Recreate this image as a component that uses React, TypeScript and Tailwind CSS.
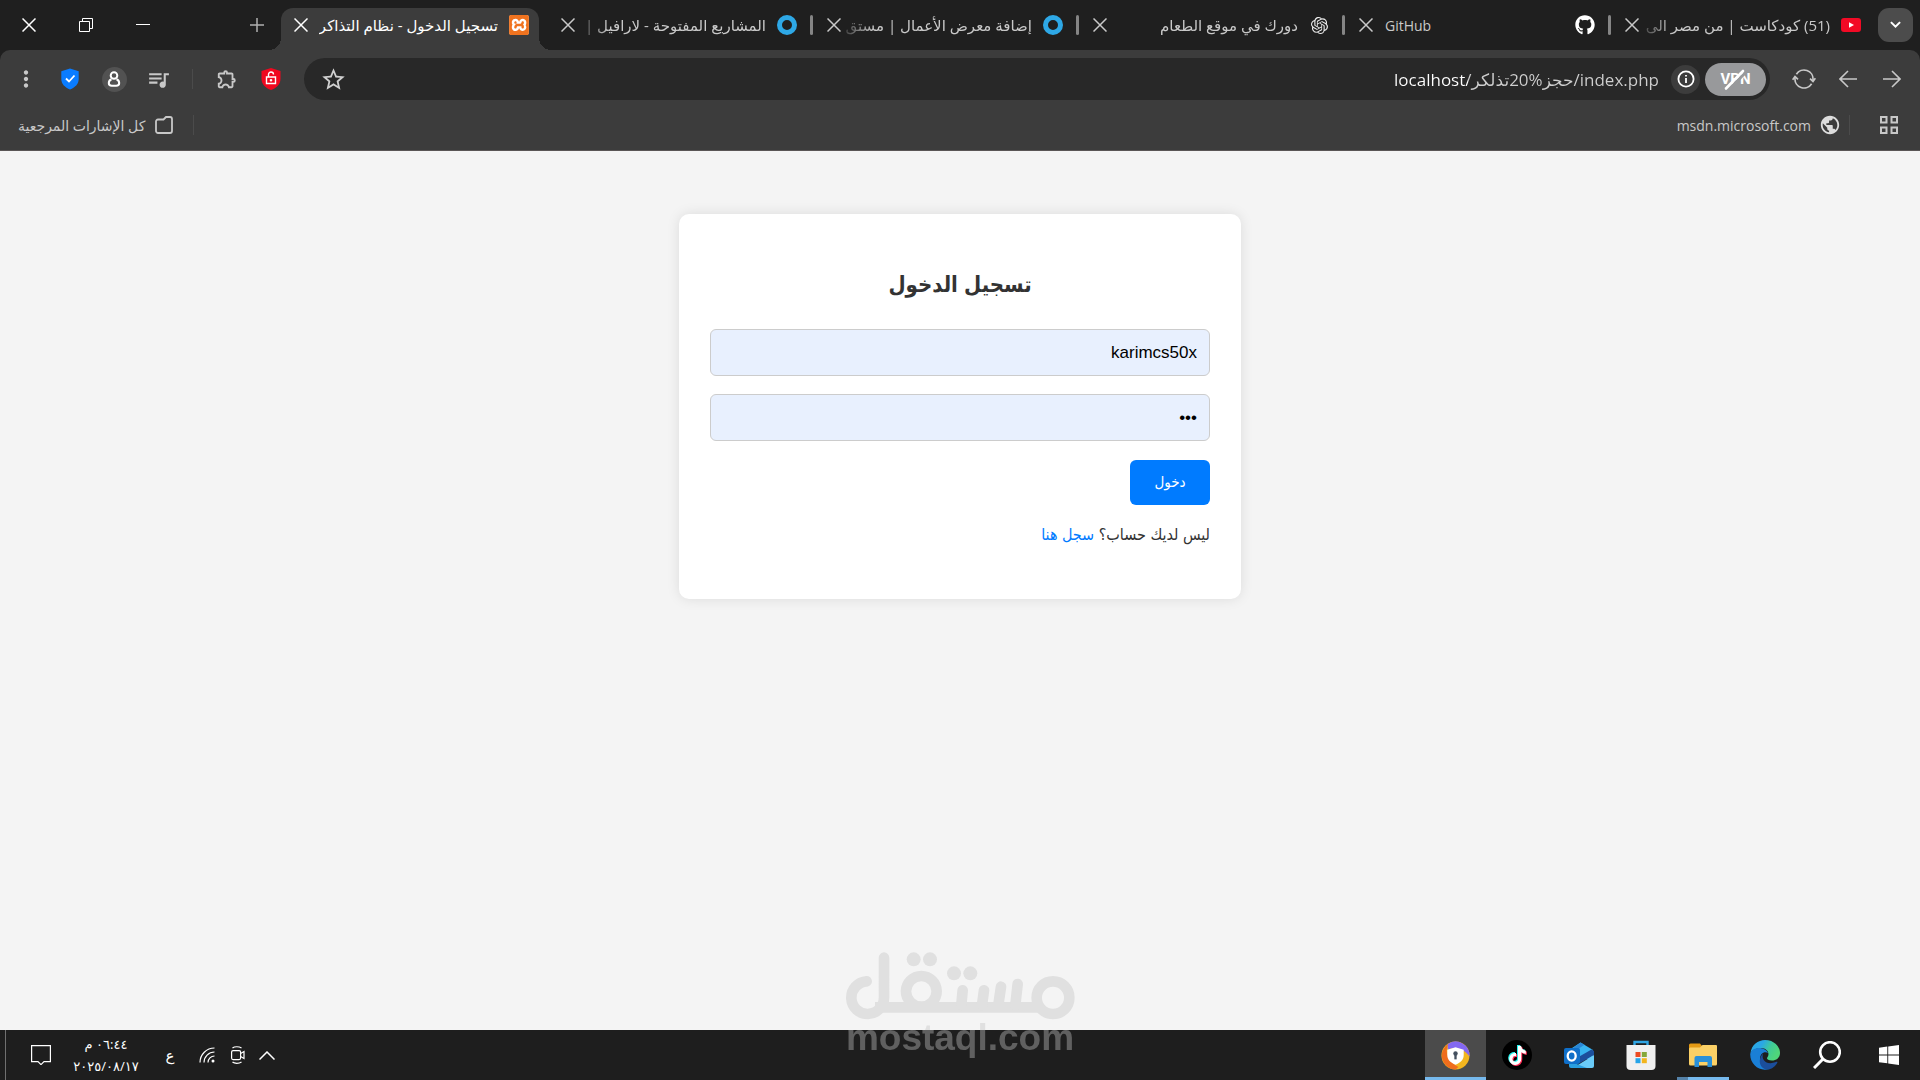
import React from "react";
import { FaGithub, FaTiktok } from "react-icons/fa";
import { SiOpenai, SiXampp } from "react-icons/si";
import {
  MdMoreVert,
  MdOutlineExtension,
  MdPublic,
  MdQueueMusic,
  MdStarBorder,
} from "react-icons/md";
import { clsx } from "clsx";

interface TabProps {
  title: string;
  icon: React.ReactNode;
  ltr?: boolean;
}

const CloseIcon = () => (
  <svg viewBox="0 0 14 14" className="size-[14px]" fill="none" stroke="currentColor" strokeWidth="1.5">
    <path d="M0.5 0.5l13 13M13.5 0.5l-13 13" />
  </svg>
);

const YoutubeIcon = () => (
  <svg viewBox="0 0 20 14" className="w-5 shrink-0">
    <rect width="20" height="14" rx="3" fill="#f20a25" />
    <path d="M8 4.2v5.6L13 7z" fill="#fff" />
  </svg>
);

const RingIcon = () => (
  <svg viewBox="0 0 20 20" className="size-5 shrink-0" fill="none">
    <circle cx="10" cy="10" r="7.5" stroke="#2ea8e6" strokeWidth="5" />
  </svg>
);

const XamppIcon = () => (
  <span className="flex size-5 shrink-0 items-center justify-center rounded-[3px] bg-white">
    <SiXampp className="size-5 text-[#f0731f]" />
  </span>
);

const tabs: TabProps[] = [
  { title: "(51) كودكاست | من مصر الى", icon: <YoutubeIcon /> },
  { title: "GitHub", icon: <FaGithub className="size-5 shrink-0 text-white" />, ltr: true },
  { title: "دورك في موقع الطعام", icon: <SiOpenai className="size-[17px] text-[#eeeeee]" /> },
  { title: "إضافة معرض الأعمال | مستق", icon: <RingIcon /> },
  { title: "المشاريع المفتوحة - لارافيل |", icon: <RingIcon /> },
];

const Tab: React.FC<TabProps> = ({ title, icon, ltr }) => (
  <div className="flex h-full min-w-0 basis-[263px] items-center gap-1 pr-[14px] pl-[14px] text-[#c9c9c9]">
    <span className="ml-2 flex w-[18px] shrink-0 items-center justify-center">{icon}</span>
    <span
      dir={ltr ? "ltr" : "rtl"}
      className={clsx(
        "min-w-0 flex-1 overflow-hidden whitespace-nowrap",
        ltr ? "pl-2 text-[14px]" : "text-[15px] [mask-image:linear-gradient(to_left,#000_84%,#0003)]"
      )}
    >
      {title}
    </span>
    <button aria-label="إغلاق علامة التبويب" className="shrink-0">
      <CloseIcon />
    </button>
  </div>
);

const TabStrip = () => (
  <div className="flex h-[50px] items-center bg-[#1f1f1f] pr-[7px]">
    <button
      aria-label="البحث في علامات التبويب"
      className="ml-1 flex h-[34px] w-[35px] shrink-0 items-center justify-center rounded-[11px] bg-[#4c4c4c] text-white"
    >
      <svg viewBox="0 0 12 8" className="w-[11px]" fill="none" stroke="currentColor" strokeWidth="2.2">
        <path d="M1 1.2l5 5 5-5" />
      </svg>
    </button>
    {tabs.map((tab, index) => (
      <React.Fragment key={tab.title}>
        <Tab {...tab} />
        {index < tabs.length - 1 && (
          <span className="h-5 w-[3px] shrink-0 rounded-full bg-[#858585]" />
        )}
      </React.Fragment>
    ))}
    <div className="relative mr-2 flex h-[42px] min-w-0 basis-[258px] items-center gap-[11px] self-end rounded-t-[12px] bg-[#3c3c3c] pr-[10px] pb-2 pl-[13px] text-white">
      <span className="absolute right-[-12px] bottom-0 size-3 bg-[radial-gradient(circle_at_100%_0,transparent_12px,#3c3c3c_12px)]" />
      <span className="absolute bottom-0 left-[-12px] size-3 bg-[radial-gradient(circle_at_0_0,transparent_12px,#3c3c3c_12px)]" />
      <XamppIcon />
      <span className="min-w-0 flex-1 overflow-hidden text-[15px] whitespace-nowrap">
        تسجيل الدخول - نظام التذاكر
      </span>
      <button aria-label="إغلاق علامة التبويب" className="shrink-0">
        <CloseIcon />
      </button>
    </div>
    <button aria-label="علامة تبويب جديدة" className="mr-[17px] text-[#b0b0b0]">
      <svg viewBox="0 0 14 14" className="size-[14px]" fill="none" stroke="currentColor" strokeWidth="1.5">
        <path d="M7 0v14M0 7h14" />
      </svg>
    </button>
    <div className="mr-auto flex text-white">
      <button aria-label="تصغير" className="flex w-[57px] justify-center">
        <svg viewBox="0 0 14 14" className="size-[14px]" stroke="currentColor">
          <path d="M0 6.5h14" />
        </svg>
      </button>
      <button aria-label="استعادة" className="flex w-[57px] justify-center">
        <svg viewBox="0 0 14 14" className="size-[14px]" fill="none" stroke="currentColor">
          <path d="M0.5 3.5h10v10h-10zM3.5 3.5v-3h10v10h-3" />
        </svg>
      </button>
      <button aria-label="إغلاق" className="flex w-[57px] justify-center">
        <CloseIcon />
      </button>
    </div>
  </div>
);

const ToolButton: React.FC<{ label: string; children: React.ReactNode }> = ({ label, children }) => (
  <button aria-label={label} className="flex h-10 w-11 shrink-0 items-center justify-center text-[#c8c8c8]">
    {children}
  </button>
);

const ArrowIcon = ({ flip }: { flip?: boolean }) => (
  <svg
    viewBox="0 0 18 18"
    className={clsx("size-[18px]", flip && "-scale-x-100")}
    fill="none"
    stroke="currentColor"
    strokeWidth="1.6"
  >
    <path d="M0 9h17M9 1l8 8-8 8" />
  </svg>
);

const Toolbar = () => (
  <div className="flex h-[58px] items-center pr-[6px] pl-1">
    <ToolButton label="تقدّم">
      <ArrowIcon />
    </ToolButton>
    <ToolButton label="رجوع">
      <ArrowIcon flip />
    </ToolButton>
    <ToolButton label="إعادة التحميل">
      <svg viewBox="0 0 24 20" className="w-6" fill="none" stroke="currentColor" strokeWidth="1.7">
        <path d="M4.4 5.3A9 9 0 0 1 21 11" />
        <path d="M19.6 14.7A9 9 0 0 1 3 9" />
        <path d="M18 9.6l3 2.8 2.4-3.2" />
        <path d="M0.6 10.8L3 7.6l3 2.8" />
      </svg>
    </ToolButton>
    <div className="mr-3 ml-[11px] flex h-[42px] min-w-0 flex-1 items-center rounded-full bg-[#282828] pr-1 pl-4">
      <button
        aria-label="VPN"
        className="relative flex h-[33px] w-[61px] shrink-0 items-center justify-center rounded-full bg-[#98999b] font-[Roboto,sans-serif] text-[15px] font-bold text-white"
      >
        VPN
        <svg viewBox="0 0 61 33" className="absolute inset-0" fill="none" strokeLinecap="round">
          <path d="M23 27.5L40.5 9.5" stroke="#98999b" strokeWidth="3" />
          <path d="M21 25.5L38 8" stroke="#fff" strokeWidth="2.6" />
        </svg>
      </button>
      <button
        aria-label="معلومات الموقع"
        className="mr-[5px] flex size-[29px] shrink-0 items-center justify-center rounded-full bg-[#3c3c3c] text-white"
      >
        <svg viewBox="0 0 18 18" className="size-[18px]" fill="none" stroke="currentColor" strokeWidth="1.8">
          <circle cx="9" cy="9" r="7.6" />
          <path d="M9 8v5M9 5v1.6" />
        </svg>
      </button>
      {/* host part is brighter than the path */}
      <input
        dir="ltr"
        aria-label="شريط العنوان"
        defaultValue="localhost/حجز%20تذلكر/index.php"
        className="mr-3 h-8 min-w-0 flex-1 bg-[linear-gradient(to_left,#cfcfcf_191px,#ffffff_191px)] bg-clip-text text-right text-[17px] text-transparent outline-none"
      />
      <button aria-label="إضافة إشارة مرجعية" className="mr-auto shrink-0 text-[#d0d0d0]">
        <MdStarBorder className="size-[27px]" />
      </button>
    </div>
    <ToolButton label="حماية الموقع">
      <svg viewBox="0 0 20 22" className="w-5">
        <path d="M10 0l9.5 3v8c0 5-4 9-9.5 11C4.5 20 0.5 16 0.5 11V3z" fill="#f0081f" />
        <path d="M5.5 9h9v6.5h-9zM7.5 9V6.5a2.5 2.5 0 0 1 5 0M10 11v2.5M8.8 12.2h2.4" fill="none" stroke="#fff" strokeWidth="1.4" />
      </svg>
    </ToolButton>
    <ToolButton label="الإضافات">
      <MdOutlineExtension className="size-[22px]" />
    </ToolButton>
    <span className="mx-3 h-5 w-px bg-[#4b4b4b]" />
    <ToolButton label="الوسائط">
      <MdQueueMusic className="size-[25px]" />
    </ToolButton>
    <ToolButton label="الملف الشخصي">
      <span className="flex size-[25px] items-center justify-center rounded-full bg-[#525252] text-white">
        <svg viewBox="0 0 14 16" className="h-4" fill="none" stroke="currentColor" strokeWidth="2">
          <circle cx="7" cy="4.5" r="3.3" />
          <path d="M4.5 8.2C2.5 9 1.8 10.5 1.8 12c0 1.8 1.2 2.8 3 2.8h4.4c1.8 0 3-1 3-2.8 0-1.5-.7-3-2.7-3.8" />
        </svg>
      </span>
    </ToolButton>
    <ToolButton label="الأمان">
      <svg viewBox="0 0 18 22" className="w-[18px]">
        <path d="M9 0.5l8.7 2.7V11c0 5-3.7 8.5-8.7 10.5C4 19.5 0.3 16 0.3 11V3.2z" fill="#0a7cff" />
        <path d="M5 10.5l3 3 5.5-6" fill="none" stroke="#fff" strokeWidth="1.8" />
      </svg>
    </ToolButton>
    <ToolButton label="القائمة">
      <MdMoreVert className="size-[26px]" />
    </ToolButton>
  </div>
);

const BookmarksBar = () => (
  <div className="flex h-[34px] items-center pr-[22px] pl-[18px] text-[#c8c8c8]">
    <button aria-label="مجموعات علامات التبويب">
      <svg viewBox="0 0 18 18" className="size-[18px]" fill="none" stroke="currentColor" strokeWidth="2">
        <path d="M1 1h5.5v5.5H1zM11.5 1H17v5.5h-5.5zM1 11.5h5.5V17H1zM11.5 11.5H17V17h-5.5z" />
      </svg>
    </button>
    <span className="mr-[30px] ml-[8px] h-5 w-px bg-[#4b4b4b]" />
    <a href="#msdn" className="flex items-center gap-2">
      <MdPublic className="size-[22px] text-[#dcdcdc]" />
      <span dir="ltr" className="text-[14px]">
        msdn.microsoft.com
      </span>
    </a>
    <span className="mr-auto ml-5 h-5 w-px bg-[#4b4b4b]" />
    <button className="flex items-center gap-[10px]">
      <svg viewBox="0 0 18 18" className="size-[18px]" fill="none" stroke="currentColor" strokeWidth="1.8">
        <path d="M3 3.5h5.5L11 1h4a2 2 0 0 1 2 2v12a2 2 0 0 1-2 2H3a2 2 0 0 1-2-2V5.5a2 2 0 0 1 2-2z" />
      </svg>
      <span className="text-[14px]">كل الإشارات المرجعية</span>
    </button>
  </div>
);

const LoginForm = () => (
  <form
    onSubmit={(e) => e.preventDefault()}
    className="mx-auto w-full max-w-[562px] rounded-[10px] bg-white p-[31px] font-['Liberation_Sans','DejaVu_Sans_Condensed','DejaVu_Sans',sans-serif] text-[#333333] shadow-[0_0_13px_rgba(0,0,0,0.1)]"
  >
    <h1 className="mt-[23px] mb-[27px] text-center text-[22px] leading-[34px] font-bold">
      تسجيل الدخول
    </h1>
    <input
      type="text"
      aria-label="اسم المستخدم"
      defaultValue="karimcs50x"
      className="block h-[47px] w-full rounded-[6px] border border-[#cccccc] bg-[#e8f0fe] px-3 text-[17px] text-black outline-none"
    />
    <input
      type="password"
      aria-label="كلمة المرور"
      defaultValue="123"
      className="mt-[18px] block h-[47px] w-full rounded-[6px] border border-[#cccccc] bg-[#e8f0fe] px-3 text-[17px] text-black outline-none"
    />
    <button className="mt-[19px] block h-[45px] w-20 rounded-[6px] bg-[#007bff] text-[15px] text-white">
      دخول
    </button>
    <p className="mt-[18px] mb-[21px] text-[16px] leading-6">
      ليس لديك حساب؟{" "}
      <a href="#register" className="text-[#007bff]">
        سجل هنا
      </a>
    </p>
  </form>
);

const SecureBrowserIcon = () => (
  <svg viewBox="0 0 30 30" className="size-[29px]">
    <circle cx="15" cy="15" r="14.5" fill="#f3b61f" />
    <path d="M15 29.5A14.5 14.5 0 0 1 8 2.5C4 9 5 19 18 27z" fill="#ef6d1d" />
    <path d="M7 3A14.5 14.5 0 0 1 29.5 16C25 9 16 5 7 9z" fill="#8468f2" />
    <path d="M15 6.5l8.5 2.5v5.5c0 5-3.5 8-8.5 10-5-2-8.5-5-8.5-10V9z" fill="#fff" />
    <circle cx="15" cy="13" r="2.3" fill="#44505f" />
    <path d="M13.8 13h2.4v6h-2.4z" fill="#44505f" />
  </svg>
);

const TiktokIcon = () => (
  <span className="relative flex size-[30px] items-center justify-center rounded-full bg-black">
    <FaTiktok className="absolute top-[5px] left-[5px] size-[19px] text-[#25f4ee]" />
    <FaTiktok className="absolute top-[7px] left-[7px] size-[19px] text-[#fe2c55]" />
    <FaTiktok className="absolute top-[6px] left-[6px] size-[19px] text-white" />
  </span>
);

const OutlookIcon = () => (
  <svg viewBox="0 0 30 28" className="w-[30px]">
    <path d="M5 9L16.5 1.5 29 9v9H5z" fill="#38b4f0" />
    <path d="M5 10L16.5 1.5l4 2.3L5 14z" fill="#2a86d4" />
    <path d="M27.5 8.5L30 10v4L16 22h-5v-4z" fill="#1c4f9c" />
    <path d="M30 14v11a2 2 0 0 1-2 2H9z" fill="#6acbf8" />
    <path d="M5 20l18 7H7a2 2 0 0 1-2-2z" fill="#2a9fe0" />
    <rect y="7" width="16" height="16" rx="2" fill="#0f6fc9" />
    <ellipse cx="7.7" cy="15" rx="4" ry="4.6" fill="none" stroke="#fff" strokeWidth="2.3" />
  </svg>
);

const StoreIcon = () => (
  <svg viewBox="0 0 30 30" className="size-[30px]">
    <path d="M8.5 6V2h13v4" fill="none" stroke="#2fa5e4" strokeWidth="2.4" />
    <path d="M0.5 5h29v21a4 4 0 0 1-4 4h-21a4 4 0 0 1-4-4z" fill="#f0f0f0" />
    <path d="M9.5 12h5v5h-5z" fill="#ec4b22" />
    <path d="M15.8 12h5v5h-5z" fill="#84a83a" />
    <path d="M9.5 18.2h5v5h-5z" fill="#25a4e8" />
    <path d="M15.8 18.2h5v5h-5z" fill="#f2b51d" />
  </svg>
);

const ExplorerIcon = () => (
  <svg viewBox="0 0 28 24" className="w-7">
    <path d="M0 2A1.5 1.5 0 0 1 1.5 0.5H11L13 3v4H0z" fill="#e59a14" />
    <path d="M1 4.5h10L13.5 2H27a1 1 0 0 1 1 1v18a1.5 1.5 0 0 1-1.5 1.5h-25A1.5 1.5 0 0 1 0 21V5.5z" fill="#fbd066" />
    <path d="M5.5 24v-9a2 2 0 0 1 2-2H21a2 2 0 0 1 2 2v9h-4.5v-5H10v5z" fill="#2a90d9" />
  </svg>
);

const EdgeIcon = () => (
  <svg viewBox="0 0 30 30" className="size-[30px]">
    <defs>
      <linearGradient id="edgeTop" x1="0" y1="0" x2="1" y2="0.4">
        <stop offset="0.4" stopColor="#2aa7e6" />
        <stop offset="0.7" stopColor="#3fcb98" />
        <stop offset="1" stopColor="#4fd67a" />
      </linearGradient>
    </defs>
    <path d="M0.5 13C1.5 5 8 0 15 0c9 0 15 6.5 15 13 0 5-4 7.500-8 7.500-3.500 0-5-1.300-5-2.300 0-.8 1.500-1.700 1.500-4.200 0-3-3-6-7.500-6C5.500 8 2 10.500 0.500 13z" fill="url(#edgeTop)" />
    <path d="M0.2 14C1 9.500 6 7.500 10.500 8c4 .5 6.500 2.500 7.500 5-4-2-8 1-8 6 0 5 4 9 9 10-9 3-19-4-18.800-15z" fill="#1a7fd6" />
    <path d="M13 13.500c-2 7 4 12 13 8.500 1-.4 1.800 0 1.200 1C24 28 20 29.500 17.500 29.500 10 29 7 20 13 13.500z" fill="#1b4e9b" />
  </svg>
);

const SearchIcon = () => (
  <svg viewBox="0 0 28 28" className="size-7" fill="none" stroke="#fff" strokeWidth="2.6">
    <circle cx="17" cy="11" r="9.8" />
    <path d="M10 18L1 27" strokeWidth="3" />
  </svg>
);

const WindowsIcon = () => (
  <svg viewBox="0 0 20 20" className="size-5" fill="#fff">
    <path d="M0 2.8L8.3 1.6v7.8H0zM9.2 1.5L20 0v9.4H9.2zM0 10.4h8.3v7.9L0 17.2zM9.2 10.4H20V20L9.2 18.4z" />
  </svg>
);

const apps = [
  { label: "ابدأ", icon: <WindowsIcon />, state: "" },
  { label: "بحث", icon: <SearchIcon />, state: "" },
  { label: "Edge", icon: <EdgeIcon />, state: "" },
  { label: "مستكشف الملفات", icon: <ExplorerIcon />, state: "open" },
  { label: "Store", icon: <StoreIcon />, state: "" },
  { label: "Outlook", icon: <OutlookIcon />, state: "" },
  { label: "TikTok", icon: <TiktokIcon />, state: "" },
  { label: "المتصفح", icon: <SecureBrowserIcon />, state: "active" },
];

const Taskbar = () => (
  <footer className="flex h-[50px] items-center bg-[#1e1e1e] pl-[5px] text-white">
    <div className="flex h-full">
      {apps.map((app) => (
        <button
          key={app.label}
          aria-label={app.label}
          className={clsx(
            "relative flex h-full items-center justify-center",
            app.state === "active" ? "w-[61px] bg-[#4b4b4b]" : "w-[62px]"
          )}
        >
          {app.icon}
          {app.state === "active" && <span className="absolute inset-x-0 bottom-0 h-[3px] bg-[#76b9ed]" />}
          {app.state === "open" && (
            <span className="absolute inset-x-[5px] bottom-0 h-[3px] border-l-[11px] border-[#5582a8] bg-[#76b9ed]" />
          )}
        </button>
      ))}
    </div>
    <div className="mr-auto flex h-full items-center">
      <button aria-label="الأيقونات المخفية">
        <svg viewBox="0 0 16 9" className="w-4" fill="none" stroke="currentColor" strokeWidth="1.5">
          <path d="M0.5 8.5L8 1l7.5 7.5" />
        </svg>
      </button>
      <button aria-label="الكاميرا" className="mr-[14px]">
        <svg viewBox="0 0 14 18" className="w-[14px]" fill="none" stroke="currentColor" strokeWidth="1.2">
          <rect x="0.6" y="4.6" width="9" height="9" rx="1.5" />
          <path d="M9.6 7.5l3.4-2v7l-3.4-2M1.5 2C3.5.3 8 .3 10.5 2M1.5 16c2 1.7 6.500 1.7 9 0" />
        </svg>
      </button>
      <button aria-label="الشبكة" className="mr-4">
        <svg viewBox="0 0 16 16" className="size-4" fill="none" stroke="currentColor" strokeWidth="1.2">
          <path d="M1 15.5A14.5 14.5 0 0 1 15.5 1M5 15.5A10.5 10.5 0 0 1 15.5 5M9 15.5A6.5 6.5 0 0 1 15.5 9" />
          <circle cx="14" cy="14" r="1.5" fill="currentColor" stroke="none" />
        </svg>
      </button>
      <button className="mr-5 w-[18px] text-[15px]">ع</button>
      <button className="mr-4 flex w-[78px] flex-col items-center text-[13px] leading-[22px] whitespace-nowrap">
        <span>٠٦:٤٤ م</span>
        <span>٢٠٢٥/٠٨/١٧</span>
      </button>
      <button aria-label="الإشعارات" className="mr-4 ml-[25px]">
        <svg viewBox="0 0 20 20" className="size-5" fill="none" stroke="currentColor" strokeWidth="1.2">
          <path d="M0.6 0.6h18.8v16h-6.4l-3 3-3-3H0.6z" />
        </svg>
      </button>
      <span className="h-full w-px bg-[#707070]" />
    </div>
  </footer>
);

const Watermark = () => (
  <div
    dir="ltr"
    className="pointer-events-none absolute bottom-0 left-1/2 flex h-[130px] w-[230px] -translate-x-1/2 flex-col items-center text-[#c3c3c3] opacity-40"
  >
    <svg viewBox="75 60 690 210" className="w-[230px] shrink-0" fill="none" stroke="currentColor" strokeWidth="32" strokeLinecap="round">
      <circle cx="699" cy="203" r="49" />
      <circle cx="304" cy="184" r="46" />
      <path d="M192 83V203A49 49 0 1 1 140 154" />
      <path d="M165 232H655" strokeLinecap="butt" />
      <path d="M428 181L424 225M492 181L486 225M543 170L535 225M593 162L586 225" />
      <g fill="currentColor" stroke="none">
        <circle cx="281" cy="88" r="21" />
        <circle cx="330" cy="88" r="21" />
        <circle cx="402" cy="130" r="21" />
        <circle cx="451" cy="130" r="21" />
      </g>
    </svg>
    <span className="font-['Liberation_Sans',sans-serif] text-[37px] leading-[36px] font-bold">
      mostaql.com
    </span>
  </div>
);

const App: React.FC = () => {
  return (
    <div
      dir="rtl"
      className="relative flex min-h-screen flex-col bg-[#f4f4f4] font-['Open_Sans','DejaVu_Sans',sans-serif]"
    >
      <header className="bg-[#1f1f1f]">
        <TabStrip />
        <div className="rounded-t-[10px] border-b border-[#5a5656] bg-[#3c3c3c] pb-2">
          <Toolbar />
          <BookmarksBar />
        </div>
      </header>
      <main className="flex-1 px-4 pt-[63px]">
        <LoginForm />
      </main>
      <Taskbar />
      <Watermark />
    </div>
  );
};

export default App;
